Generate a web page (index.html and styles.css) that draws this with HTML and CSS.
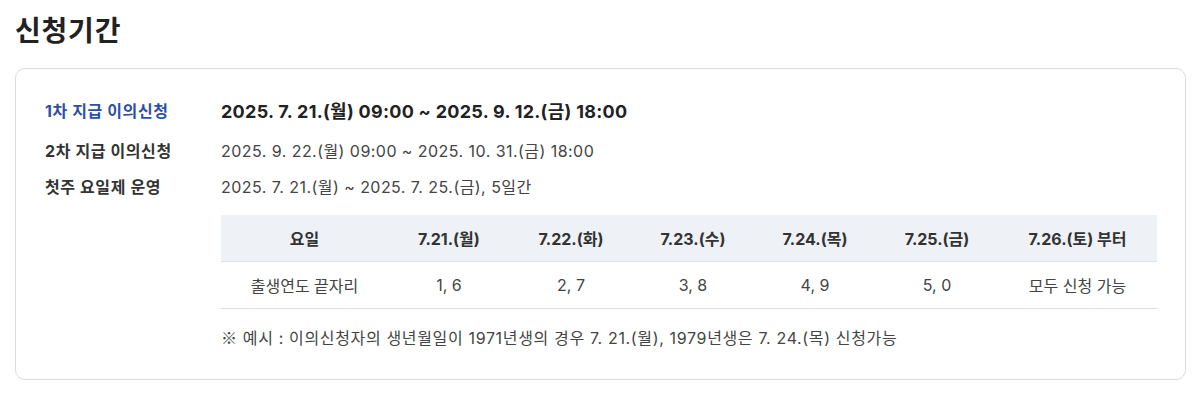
FILE: index.html
```html
<!DOCTYPE html>
<html lang="ko">
<head>
<meta charset="utf-8">
<title>신청기간</title>
<link rel="stylesheet" href="styles.css">
</head>
<body>
<section class="section">
  <h2 class="title">신청기간</h2>
  <div class="card">
    <div class="periods">
      <div class="row row-main">
        <div class="label label-primary">1차 지급 이의신청</div>
        <div class="value value-strong">2025. 7. 21.(월) 09:00 ~ 2025. 9. 12.(금) 18:00</div>
      </div>
      <div class="row">
        <div class="label">2차 지급 이의신청</div>
        <div class="value">2025. 9. 22.(월) 09:00 ~ 2025. 10. 31.(금) 18:00</div>
      </div>
      <div class="row">
        <div class="label">첫주 요일제 운영</div>
        <div class="value">2025. 7. 21.(월) ~ 2025. 7. 25.(금), 5일간</div>
      </div>
    </div>
    <div class="schedule">
      <table class="week-table">
        <colgroup>
          <col class="col-first">
          <col class="col-day">
          <col class="col-day">
          <col class="col-day">
          <col class="col-day">
          <col class="col-day">
          <col class="col-last">
        </colgroup>
        <thead>
          <tr>
            <th>요일</th>
            <th>7.21.(월)</th>
            <th>7.22.(화)</th>
            <th>7.23.(수)</th>
            <th>7.24.(목)</th>
            <th>7.25.(금)</th>
            <th>7.26.(토) 부터</th>
          </tr>
        </thead>
        <tbody>
          <tr>
            <td>출생연도 끝자리</td>
            <td>1, 6</td>
            <td>2, 7</td>
            <td>3, 8</td>
            <td>4, 9</td>
            <td>5, 0</td>
            <td>모두 신청 가능</td>
          </tr>
        </tbody>
      </table>
      <p class="note"><span class="mark">※</span> 예시 : 이의신청자의 생년월일이 1971년생의 경우 7. 21.(월), 1979년생은 7. 24.(목) 신청가능</p>
    </div>
  </div>
</section>
</body>
</html>
```

FILE: styles.css
```css
* { box-sizing: border-box; }

html, body {
  margin: 0;
  padding: 0;
  background: #ffffff;
}

body {
  font-family: Inter, "Noto Sans CJK KR", "Noto Sans", sans-serif;
  color: #333333;
}

.section {
  padding: 12px 14px 0 15px;
}

.title {
  margin: 0;
  font-size: 28px;
  line-height: 38px;
  font-weight: 700;
  color: #222222;
  letter-spacing: 0.8px;
}

.card {
  margin-top: 18px;
  border: 1px solid #dcdcdc;
  border-radius: 10px;
  padding: 26px 29px 29px 29px;
}

.periods {
  display: flex;
  flex-direction: column;
  gap: 12px;
}

.row {
  display: grid;
  grid-template-columns: 176px 1fr;
  align-items: center;
  line-height: 24px;
}

.row-main {
  padding-top: 1px;
  line-height: 31px;
}

.label {
  font-size: 16px;
  font-weight: 700;
  color: #333333;
  letter-spacing: 0.6px;
}

.label-primary {
  color: #2c4fa6;
}

.value {
  font-size: 16px;
  color: #444444;
  letter-spacing: 0.45px;
}

.value-strong {
  font-size: 18px;
  font-weight: 700;
  color: #222222;
  letter-spacing: 0.28px;
}

.schedule {
  margin-left: 176px;
  margin-top: 16px;
}

.week-table {
  width: 100%;
  border-collapse: collapse;
  table-layout: fixed;
  font-size: 16px;
}

.col-first { width: 167px; }
.col-day { width: 122px; }
.col-last { width: 159px; }

.week-table th {
  height: 46px;
  background: #eef2f7;
  border-bottom: 1px solid #dbe2ec;
  font-weight: 700;
  color: #333333;
  text-align: center;
  padding: 0;
}

.week-table td {
  height: 47px;
  border-bottom: 1px solid #dddddd;
  color: #444444;
  text-align: center;
  padding: 0;
}

.note {
  margin: 16px 0 0;
  font-size: 16px;
  line-height: 24px;
  color: #444444;
  letter-spacing: 0.65px;
}

.mark {
  font-family: "Noto Sans CJK KR", sans-serif;
}
```
